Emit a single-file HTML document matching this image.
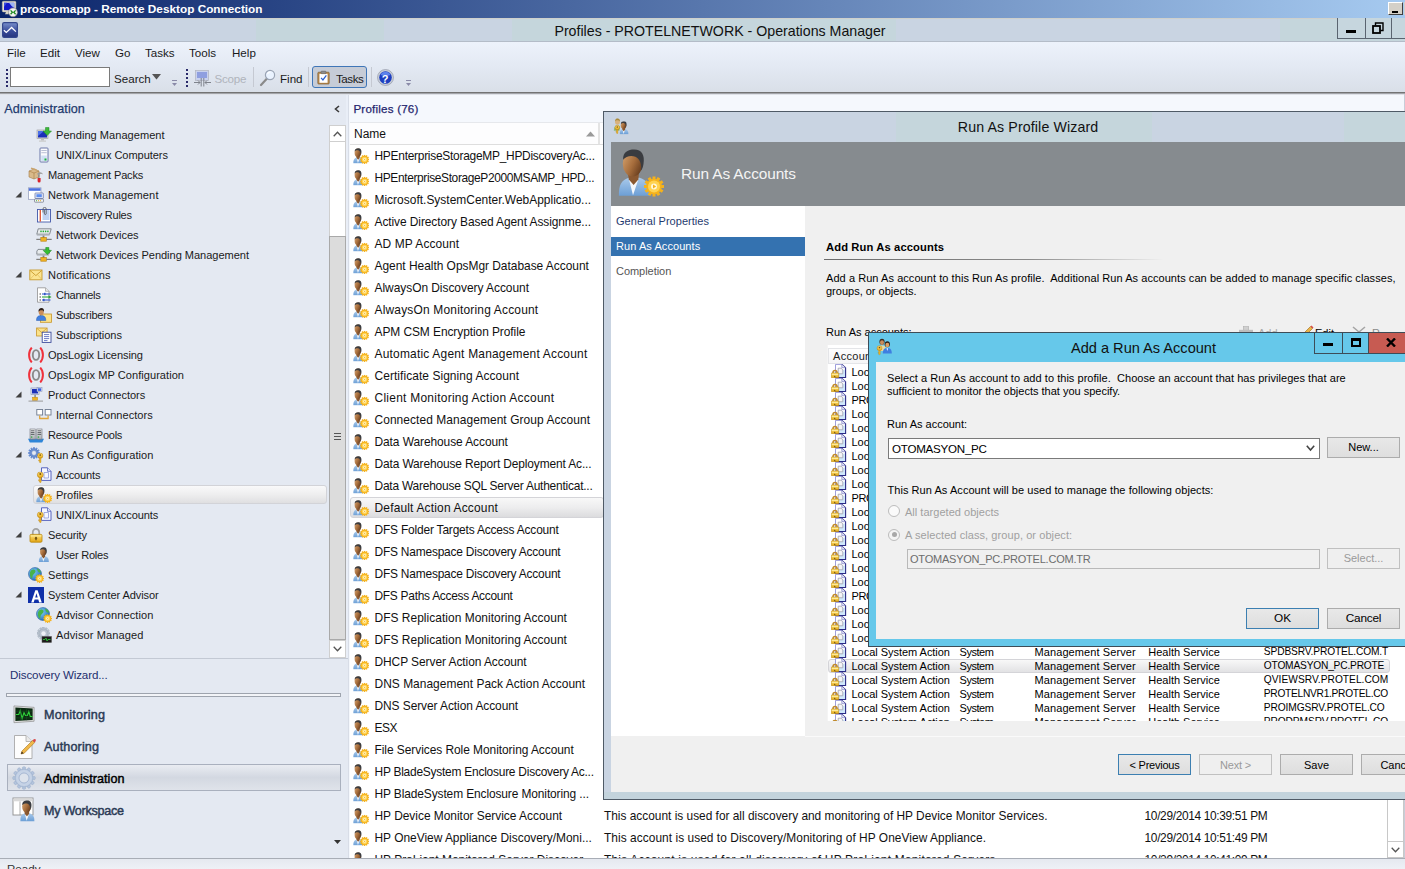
<!DOCTYPE html>
<html lang="en"><head><meta charset="utf-8"><title>Profiles - PROTELNETWORK - Operations Manager</title>
<style>
*{box-sizing:border-box;margin:0;padding:0}
html,body{width:1405px;height:869px;overflow:hidden}
body{position:relative;font-family:"Liberation Sans",sans-serif;background:#fff}
.a{position:absolute}
.t{position:absolute;white-space:pre;line-height:16px}
.clip{position:absolute;overflow:hidden}
</style></head><body>
<svg width="0" height="0" style="position:absolute">
<defs>
<linearGradient id="gBody" x1="0" y1="0" x2="0" y2="1"><stop offset="0" stop-color="#a9c9ea"/><stop offset="1" stop-color="#6c9fd6"/></linearGradient>
<linearGradient id="gFace" x1="0" y1="0" x2="1" y2=".6"><stop offset="0" stop-color="#d9a672"/><stop offset=".6" stop-color="#a66d3c"/><stop offset="1" stop-color="#6b4020"/></linearGradient>
<radialGradient id="gGlobe" cx="0.35" cy="0.35" r="0.8"><stop offset="0" stop-color="#7fd0f5"/><stop offset="1" stop-color="#1c5fb0"/></radialGradient>
<linearGradient id="gGold" x1="0" y1="0" x2="0" y2="1"><stop offset="0" stop-color="#ffe27a"/><stop offset="1" stop-color="#e3a514"/></linearGradient>
<linearGradient id="gGrey" x1="0" y1="0" x2="0" y2="1"><stop offset="0" stop-color="#f4f4f4"/><stop offset="1" stop-color="#a9adb3"/></linearGradient>
<symbol id="gear" viewBox="-5 -5 10 10">
 <g fill="#f5b21c">
 <rect x="-.75" y="-5" width="1.5" height="10"/><rect x="-.75" y="-5" width="1.5" height="10" transform="rotate(30)"/><rect x="-.75" y="-5" width="1.5" height="10" transform="rotate(60)"/><rect x="-.75" y="-5" width="1.5" height="10" transform="rotate(90)"/><rect x="-.75" y="-5" width="1.5" height="10" transform="rotate(120)"/><rect x="-.75" y="-5" width="1.5" height="10" transform="rotate(150)"/>
 <circle r="3.9"/></g><circle r="3" fill="#ffd352"/><circle r="1.5" fill="#fff6d8"/><path d="M-.5 -1 L1.1 0 L-.5 1Z" fill="#f5b21c"/>
</symbol>
<symbol id="gearg" viewBox="-5 -5 10 10">
 <g fill="#8fa9cc" stroke="#5f7fae" stroke-width=".3">
 <rect x="-1" y="-5" width="2" height="10" rx=".5"/><rect x="-1" y="-5" width="2" height="10" rx=".5" transform="rotate(45)"/><rect x="-1" y="-5" width="2" height="10" rx=".5" transform="rotate(90)"/><rect x="-1" y="-5" width="2" height="10" rx=".5" transform="rotate(135)"/>
 <circle r="3.5"/></g><circle r="1.8" fill="#e4e9f2"/>
</symbol>
<symbol id="person" viewBox="0 0 12 16">
 <path d="M.3 15.6 C.2 12 1.2 10.3 3.6 9.6 L7.2 9.6 C9.6 10.3 10.8 12 10.8 15.6 Z" fill="url(#gBody)"/>
 <path d="M3.6 9.8 L5 15.4 L6.9 9.8 Z" fill="#f4f7fb"/>
 <path d="M3.2 7.5 L3.6 10.2 L5.2 12 L6.8 10.2 L7 7.5Z" fill="#8a5830"/>
 <ellipse cx="4.9" cy="4.9" rx="3.3" ry="4.3" fill="url(#gFace)"/>
 <path d="M1.7 3.6 C1.6 1 3.4 .2 5.4 .2 C8 .2 9 2.2 8.5 5 C8.3 6.2 8 6.8 7.7 7.2 C7.9 5.2 7.4 3.4 5.8 2.6 C4.4 2 2.6 2.4 1.7 3.6 Z" fill="#3a3c40"/>
</symbol>
<symbol id="ic-prof" viewBox="0 0 16 16">
 <use href="#person" x="0" y="0" width="11.8" height="15.8"/>
 <use href="#gear" x="7" y="6.8" width="9.2" height="9.2"/>
</symbol>
<symbol id="ic-user" viewBox="0 0 16 16">
 <use href="#person" x="2.5" y="0" width="11.5" height="15.5"/>
</symbol>
<symbol id="ic-pending" viewBox="0 0 16 16">
 <rect x="1" y="3" width="11" height="8.5" fill="#d8d8d8" stroke="#9a9a9a" stroke-width=".6"/>
 <rect x="2" y="4" width="9" height="6.5" fill="#1c2fb8"/>
 <path d="M2 4 L8 4 L2 9 Z" fill="#4a6fe8"/>
 <rect x="5" y="11.5" width="3" height="2" fill="#bdbdbd"/><rect x="3" y="13.5" width="7" height="1.2" fill="#c9c9c9"/>
 <path d="M9.5 0.5 H13 V4 H15.5 L11.2 8.5 L7 4 H9.5 Z" fill="#3db83a" stroke="#1f8a22" stroke-width=".5"/>
</symbol>
<symbol id="ic-tower" viewBox="0 0 16 16">
 <rect x="4" y="1" width="8" height="14" rx=".8" fill="#fbfbfd" stroke="#5b6aa0" stroke-width=".9"/>
 <rect x="5.3" y="3" width="5.4" height="1" fill="#b8bfd4"/><rect x="5.3" y="5.2" width="5.4" height="1" fill="#b8bfd4"/>
 <rect x="5.2" y="8.5" width="5.6" height="5.5" fill="#cfe0f3"/>
 <rect x="8.5" y="11.5" width="2" height="2" fill="#19b33a"/>
</symbol>
<symbol id="ic-mp" viewBox="0 0 16 16">
 <path d="M1 4 L6 2 L11 4 L11 10 L6 12 L1 10 Z" fill="#d9b98a" stroke="#a67c45" stroke-width=".6"/>
 <path d="M1 4 L6 6 L11 4 M6 6 V12" fill="none" stroke="#a67c45" stroke-width=".6"/>
 <path d="M3 1.2 L8.5 3 " stroke="#c9a36c" stroke-width="1.4"/>
 <path d="M9 7 C11 4.5 14 5 15 7.5 C13.5 6.5 12 6.5 11 8.5 Z" fill="#9a9a9a"/>
 <rect x="10.2" y="8" width="1.3" height="4" fill="#8a8a8a"/>
 <path d="M9.6 11 H12.6 V14 A1.5 1.5 0 0 1 9.6 14 Z" fill="#d8232a"/>
</symbol>
<symbol id="ic-netmgmt" viewBox="0 0 16 16">
 <rect x=".5" y=".8" width="12.5" height="11.5" fill="#fff" stroke="#8c97b8" stroke-width=".7"/>
 <rect x=".9" y="1.2" width="11.7" height="2.6" fill="#4a6fe0"/>
 <rect x="7" y="6" width="8.3" height="5.5" rx=".6" fill="#e9edf7" stroke="#5b6aa0" stroke-width=".7"/>
 <rect x="8.4" y="7.2" width="5.4" height="3" fill="#5d8df0"/>
 <rect x="6.5" y="12" width="9" height="3.2" rx=".6" fill="#f3f3f3" stroke="#6b7488" stroke-width=".7"/>
 <rect x="8" y="13.2" width="1" height="1" fill="#4bb34b"/><rect x="10" y="13.2" width="1" height="1" fill="#e0b030"/><rect x="12" y="13.2" width="1" height="1" fill="#e0b030"/>
</symbol>
<symbol id="ic-rules" viewBox="0 0 16 16">
 <rect x="1.5" y="2.5" width="13" height="12.5" fill="#fff" stroke="#4257a8" stroke-width=".9"/>
 <path d="M6.5 4 H13.5 M6.5 6 H13.5 M6.5 8 H13.5 M6.5 10 H13.5 M6.5 12 H13.5" stroke="#6f9ae0" stroke-width=".9"/>
 <rect x="3.6" y="3" width="1.4" height="11.6" fill="#e05a3a"/>
 <path d="M7 5.5 V2 A1.6 1.6 0 0 1 10.2 2 V7 A1 1 0 0 1 8.4 7 V3" fill="none" stroke="#555" stroke-width=".8"/>
</symbol>
<symbol id="ic-netdev" viewBox="0 0 16 16">
 <path d="M2.2 1.8 H15.2 L13.6 7.2 H.8 Z" fill="#e9ecee" stroke="#6f757c" stroke-width=".8"/>
 <path d="M.8 7.2 H13.6 V8.6 H.8Z" fill="#aeb3b8"/>
 <rect x="4.3" y="3.6" width="1.4" height="1.6" fill="#22a832"/><rect x="6.6" y="3.6" width="1.4" height="1.6" fill="#22a832"/><rect x="8.9" y="3.6" width="1.4" height="1.6" fill="#22a832"/><rect x="11.2" y="3.6" width="1.4" height="1.6" fill="#22a832"/>
 <rect x="6.6" y="8.6" width="1.8" height="2.4" fill="#7d7d7d"/>
 <rect x="4.8" y="10.4" width="5.6" height="3.8" fill="#f0b323" stroke="#b87f0c" stroke-width=".6"/>
 <rect x=".3" y="11.8" width="4.5" height="1.2" fill="#7f7f7f"/><rect x="10.4" y="11.8" width="5.3" height="1.2" fill="#7f7f7f"/>
</symbol>
<symbol id="ic-netdevp" viewBox="0 0 16 16">
 <path d="M2 2.4 H11.5 Q14 2.4 13.6 4.6 L13 7.2 H.8 Q.4 3.5 2 2.4 Z" fill="#e9ecee" stroke="#6f757c" stroke-width=".8"/>
 <path d="M.8 7.2 H13 V8.6 H.8Z" fill="#aeb3b8"/>
 <rect x="6.6" y="8.6" width="1.8" height="2.4" fill="#7d7d7d"/>
 <rect x="4.8" y="10.4" width="5.6" height="3.8" fill="#f0b323" stroke="#b87f0c" stroke-width=".6"/>
 <rect x=".3" y="11.8" width="4.5" height="1.2" fill="#7f7f7f"/><rect x="10.4" y="11.8" width="5.3" height="1.2" fill="#7f7f7f"/>
 <path d="M9.8 0.4 H12.8 V3.4 H15.4 L11.3 7.6 L7.2 3.4 H9.8 Z" fill="#35c030" stroke="#1a8a1e" stroke-width=".6"/>
</symbol>
<symbol id="ic-mail" viewBox="0 0 16 16">
 <rect x="1.8" y="3" width="12.2" height="9.8" fill="#fbe491" stroke="#c89a2c" stroke-width=".9"/>
 <path d="M2 3.4 L7.9 8.6 L13.8 3.4" fill="none" stroke="#c89a2c" stroke-width=".9"/>
 <path d="M2 12.4 L6 8 M13.8 12.4 L9.8 8" stroke="#e2bb58" stroke-width=".7"/>
</symbol>
<symbol id="ic-chan" viewBox="0 0 16 16">
 <path d="M1.5 .8 H9.5 L13 4.3 V15.2 H1.5 Z" fill="#fff" stroke="#8f8f8f" stroke-width=".8"/>
 <path d="M9.5 .8 V4.3 H13" fill="#e8e8e8" stroke="#8f8f8f" stroke-width=".6"/>
 <path d="M3.5 7 H5 M3.5 10 H5 M3.5 13 H5" stroke="#444" stroke-width="1"/>
 <path d="M6 7 H14.5" stroke="#3457c8" stroke-width="1.1"/><rect x="8" y="5.8" width="1.6" height="2.4" fill="#3457c8"/>
 <path d="M6 10 H13" stroke="#2fa43a" stroke-width="1.1"/><path d="M12.5 8.3 L15.5 10 L12.5 11.7 Z" fill="#2fa43a"/>
 <path d="M6 13 H14.5" stroke="#3457c8" stroke-width="1.1"/><rect x="7" y="11.8" width="1.6" height="2.4" fill="#3457c8"/>
</symbol>
<symbol id="ic-subscr" viewBox="0 0 16 16">
 <rect x="4.5" y="7" width="11" height="8.3" fill="#fbe28a" stroke="#c8962a" stroke-width=".8"/>
 <path d="M.5 13.5 C.5 9.5 2.5 8.6 5.2 8.6 C7.8 8.6 9.8 9.5 9.8 13.5 Z" fill="#3f7fe0" stroke="#2a5cb0" stroke-width=".5"/>
 <ellipse cx="5.2" cy="5.3" rx="2.5" ry="3" fill="#c98e5c"/>
 <path d="M2.5 5 C2.2 2 3.8 1 5.4 1 C7.4 1 8.4 2.6 7.9 5 C7.4 3.6 6.8 3.2 5.4 3.2 C4 3.2 3 3.8 2.5 5 Z" fill="#2b1d16"/>
</symbol>
<symbol id="ic-subs" viewBox="0 0 16 16">
 <rect x=".6" y="1" width="10.5" height="8" fill="#fbe28a" stroke="#c8962a" stroke-width=".8"/>
 <path d="M.8 1.3 L5.8 5.6 L10.8 1.3" fill="none" stroke="#c8962a" stroke-width=".7"/>
 <rect x="6.2" y="5.2" width="8.8" height="10.2" fill="#fff" stroke="#3b4a9a" stroke-width=".9"/>
 <path d="M8 7.6 H13.2 M8 9.6 H13.2 M8 11.6 H13.2 M8 13.6 H11.5" stroke="#5a6cc0" stroke-width=".9"/>
</symbol>
<symbol id="ic-ops" viewBox="0 0 16 16">
 <path d="M3.8 .6 C.2 4.3 .2 11.7 3.8 15.4" fill="none" stroke="#f0323c" stroke-width="2"/>
 <path d="M12.2 .6 C15.8 4.3 15.8 11.7 12.2 15.4" fill="none" stroke="#f0323c" stroke-width="2"/>
 <ellipse cx="8" cy="8" rx="3.2" ry="4.9" fill="none" stroke="#8a8a8a" stroke-width="1.9"/>
</symbol>
<symbol id="ic-prodconn" viewBox="0 0 16 16">
 <rect x="3" y="1" width="8" height="6.5" fill="#e8ecf6" stroke="#7a86b0" stroke-width=".6"/><rect x="4" y="2" width="6" height="4.5" fill="#1c2fb8"/>
 <rect x="9" y="0.6" width="5" height="4" fill="#e8ecf6" stroke="#7a86b0" stroke-width=".5"/><rect x="9.8" y="1.3" width="3.4" height="2.6" fill="#3c5fe0"/>
 <rect x="6.3" y="7.8" width="1.6" height="3" fill="#8d8d8d"/>
 <rect x="4.6" y="10.3" width="5" height="3.2" fill="#f0b323" stroke="#c48a10" stroke-width=".5"/>
 <rect x=".5" y="13.6" width="14.5" height="1" fill="#9a9a9a"/>
</symbol>
<symbol id="ic-intconn" viewBox="0 0 16 16">
 <rect x=".8" y="2.5" width="5.8" height="5.5" fill="#fff" stroke="#6d7a8f" stroke-width=".9"/>
 <rect x="9.2" y="2.5" width="5.8" height="5.5" fill="#fff" stroke="#6d7a8f" stroke-width=".9"/>
 <path d="M3.7 8.5 V11.5 H12.1 V8.5" fill="none" stroke="#e2a63a" stroke-width="1.3"/>
</symbol>
<symbol id="ic-pools" viewBox="0 0 16 16">
 <path d="M0 11.8 H16 L14.2 15.4 H1.8 Z" fill="#2f86d8"/>
 <rect x="2" y="2" width="5.2" height="10.2" fill="url(#gGrey)" stroke="#70757c" stroke-width=".6"/>
 <rect x="8.8" y="2" width="5.2" height="10.2" fill="url(#gGrey)" stroke="#70757c" stroke-width=".6"/>
 <path d="M2.8 3.8 H6.4 M2.8 5.6 H6.4 M2.8 7.4 H6.4 M9.6 3.8 H13.2 M9.6 5.6 H13.2 M9.6 7.4 H13.2" stroke="#4f5358" stroke-width=".9"/>
 <rect x="3" y="9.4" width="1.3" height="1.3" fill="#2fae3f"/><rect x="9.8" y="9.4" width="1.3" height="1.3" fill="#2fae3f"/>
</symbol>
<symbol id="key" viewBox="0 0 8 12">
 <circle cx="4" cy="3.4" r="3.1" fill="url(#gGold)" stroke="#b87f0c" stroke-width=".6"/><circle cx="4" cy="2.6" r="1" fill="#7a5206"/>
 <path d="M3.1 6.2 H4.9 V11 L4 11.9 L3.1 11 V9.6 H2.2 V8.6 H3.1 Z" fill="#eab52c" stroke="#b87f0c" stroke-width=".4"/>
</symbol>
<symbol id="ic-runas" viewBox="0 0 16 16">
 <g transform="translate(6 6)"><g fill="#6a90d4">
 <rect x="-.8" y="-6" width="1.6" height="12"/><rect x="-.8" y="-6" width="1.6" height="12" transform="rotate(30)"/><rect x="-.8" y="-6" width="1.6" height="12" transform="rotate(60)"/><rect x="-.8" y="-6" width="1.6" height="12" transform="rotate(90)"/><rect x="-.8" y="-6" width="1.6" height="12" transform="rotate(120)"/><rect x="-.8" y="-6" width="1.6" height="12" transform="rotate(150)"/>
 <circle r="4.4" stroke="#4a6fb6" stroke-width=".4"/></g><circle r="2.4" fill="#e4e9f2" stroke="#4a6fb6" stroke-width=".4"/></g>
 <use href="#key" x="8.8" y="5.8" width="6.8" height="10.2"/>
</symbol>
<symbol id="ic-acct" viewBox="0 0 16 16">
 <path d="M5.5 .8 H11.5 L15 4.3 V13.4 H5.5 Z" fill="#f6f7ff" stroke="#4554b8" stroke-width=".9"/>
 <path d="M11.5 .8 V4.3 H15" fill="#dfe3fa" stroke="#4554b8" stroke-width=".7"/>
 <path d="M8 5.5 H12.5 V11 H8 Z" fill="none" stroke="#8e9ad8" stroke-width=".8"/>
 <use href="#key" x=".5" y="4.6" width="7.6" height="11.4"/>
</symbol>
<symbol id="ic-lock" viewBox="0 0 16 16">
 <path d="M4.8 8 V5.2 A3.2 3.4 0 0 1 11.2 5.2 V8" fill="none" stroke="#a3a3a3" stroke-width="1.7"/>
 <rect x="2" y="7.4" width="12" height="7.8" rx="1.1" fill="url(#gGold)" stroke="#b8860b" stroke-width=".8"/>
 <path d="M2.6 9 H13.4" stroke="#fff1a8" stroke-width=".8"/>
 <path d="M8 9.6 L9.5 11.4 H8.6 V13.2 H7.4 V11.4 H6.5 Z" fill="#5a3e06"/>
</symbol>
<symbol id="ic-globe" viewBox="0 0 16 16">
 <circle cx="7" cy="7" r="6.5" fill="url(#gGlobe)" stroke="#1a4f94" stroke-width=".5"/>
 <path d="M3 3.5 C5 2 7 2.5 7.5 4 C8 5.5 6 6.5 5 8 C4 9.5 5 11.5 3.5 11.5 C2 10 1 6 3 3.5 Z M9 1.5 C11 2 12.5 3.5 13 5.5 C11.5 6 10 5 9.5 3.5 Z M9 8 C10.5 7.5 12 8 12.5 9.5 C11.5 11.5 10 12.5 8.5 12.8 C8 11 8 9 9 8 Z" fill="#47b24a"/>
 <use href="#gear" x="7.2" y="7.2" width="8.8" height="8.8"/>
</symbol>
<symbol id="ic-adv" viewBox="0 0 16 16">
 <rect width="16" height="16" fill="#0f2fa8"/>
 <path d="M3.2 15.5 L7.3 3.2 H9.6 L13.8 15.5 H11.2 L10.3 12.6 H6.6 L5.7 15.5 Z M7.2 10.5 H9.7 L8.45 6.3 Z" fill="#fff" fill-rule="evenodd"/>
</symbol>
<symbol id="ic-advman" viewBox="0 0 16 16">
 <g transform="translate(7.5 6.5)"><g fill="#b9c3cf" stroke="#8d98a8" stroke-width=".3">
 <rect x="-.9" y="-6.3" width="1.8" height="12.6"/><rect x="-.9" y="-6.3" width="1.8" height="12.6" transform="rotate(30)"/><rect x="-.9" y="-6.3" width="1.8" height="12.6" transform="rotate(60)"/><rect x="-.9" y="-6.3" width="1.8" height="12.6" transform="rotate(90)"/><rect x="-.9" y="-6.3" width="1.8" height="12.6" transform="rotate(120)"/><rect x="-.9" y="-6.3" width="1.8" height="12.6" transform="rotate(150)"/>
 <circle r="4.5"/></g><circle r="2.2" fill="#eef1f6"/></g>
 <rect x="6" y="9.5" width="9.5" height="6" fill="#1d1d1d" stroke="#555" stroke-width=".5"/>
 <path d="M7 12.5 H9 L10 11 L11 14 L12 12.5 H14.5" fill="none" stroke="#2fd23a" stroke-width=".8"/>
</symbol>
<symbol id="ic-lvacct" viewBox="0 0 16 16" preserveAspectRatio="none">
 <path d="M4.5 .5 H10.8 L14.6 4.2 V15.4 H4.5 Z" fill="#fff"/>
 <path d="M8 9 L14 6 V15 H6 Z" fill="#c4e2fa" opacity=".8"/>
 <path d="M4.5 15.4 V.5 H10.8" fill="none" stroke="#8c8cd6" stroke-width=".9"/>
 <path d="M10.8 .5 L14.6 4.2 V15.4 H4.5" fill="none" stroke="#2b2b86" stroke-width="1.1"/>
 <path d="M10.8 .5 V4.2 H14.6" fill="#e6e9fa" stroke="#6a6ab8" stroke-width=".6"/>
 <path d="M7.2 4.8 H10 L11.8 6.6 V11.2 H7.2 Z" fill="#f4f4f6" stroke="#9a9aa8" stroke-width=".8"/>
 <path d="M2 10.8 V9.6 A2 2.2 0 0 1 6 9.6 V10.8" fill="none" stroke="#c08a2c" stroke-width="1.5"/>
 <rect x=".3" y="10.2" width="7.4" height="5.6" rx=".6" fill="url(#gGold)" stroke="#b8860b" stroke-width=".6"/>
 <path d="M.8 12 H7.2" stroke="#fff3b0" stroke-width=".8"/>
 <path d="M3.2 13 L5 15 H3.2Z" fill="#5a4a10"/>
</symbol>
<symbol id="ic-wiz" viewBox="0 0 16 16">
 <use href="#person" x="6" y="3" width="9.5" height="12.5"/>
 <ellipse cx="4.2" cy="3.6" rx="2.3" ry="2.8" fill="#d9b27c"/><path d="M2 3.2 C2 1 3.2 .5 4.4 .5 C5.8 .5 6.6 1.6 6.4 3.2 C5.8 2.2 5 2 4.2 2 C3.2 2 2.4 2.4 2 3.2Z" fill="#a88a3a"/>
 <path d="M.8 12 C.8 8.2 2.4 7 4.2 7 C5.4 7 6.2 7.4 6.8 8.2 L6 12 Z" fill="#8fb97a"/>
 <use href="#key" x="1.2" y="6" width="5.6" height="9.6"/>
</symbol>
</defs>
</svg>

<div class="a" style="left:0px;top:0px;width:1405px;height:18px;background:linear-gradient(to right,#0a246a,#a6caf0)"></div>
<svg class="a" style="left:1px;top:0px" width="18" height="18" viewBox="0 0 18 18">
<rect x="1.3" y="1.3" width="13.6" height="10.6" rx="1" fill="#e6e2d2" stroke="#b8b4a4" stroke-width=".5"/><rect x="3" y="2.8" width="10.2" height="7.4" fill="#1418c8"/><path d="M8 2.8 H13.2 V8 Q10 6 8 2.8Z" fill="#9ab4f4"/><path d="M3 2.8 H6 L3 7Z" fill="#3a4ee0"/>
<path d="M5 12 L8 12 L7.5 14.2 H4 Z" fill="#d8d4c4"/>
<circle cx="12" cy="12.3" r="4.4" fill="#f4f4f4" stroke="#8a8a8a" stroke-width=".7"/><path d="M9.6 10.4 L11.4 12.3 L9.6 14.2 M14.6 10.4 L12.8 12.3 L14.6 14.2" fill="none" stroke="#1e8a1e" stroke-width="1.3"/></svg>
<div class="t" style="left:20px;top:0.91px;font-size:11.8px;color:#fff;font-weight:bold">proscomapp - Remote Desktop Connection</div>
<div class="a" style="left:1388px;top:2px;width:15px;height:13px;background:#d4d0c8;border:1px solid;border-color:#fff #404040 #404040 #fff"></div>
<div class="a" style="left:1392px;top:11px;width:6px;height:2px;background:#000"></div>
<div class="a" style="left:1404px;top:2px;width:1px;height:13px;background:#d4d0c8"></div>
<div class="a" style="left:0px;top:18px;width:1405px;height:23px;background:#c9d4e2"></div>
<div class="a" style="left:256px;top:18px;width:128px;height:23px;background:#c5d6dc"></div>
<div class="a" style="left:512px;top:18px;width:384px;height:23px;background:#c5d6dc"></div>
<div class="a" style="left:1280px;top:18px;width:125px;height:23px;background:#c5d6dc"></div>
<div class="a" style="left:0px;top:41px;width:1405px;height:1px;background:#b4bcc8"></div>
<div class="a" style="left:0px;top:18px;width:1405px;height:1px;background:#cfd0cc"></div>
<svg class="a" style="left:2px;top:22px" width="16" height="16" viewBox="0 0 16 16"><defs><linearGradient id="gApp" x1="0" y1="0" x2="0" y2="1"><stop offset="0" stop-color="#7990cc"/><stop offset=".55" stop-color="#3a4e9c"/><stop offset="1" stop-color="#27357c"/></linearGradient></defs><rect x=".6" y=".6" width="14.8" height="14.8" rx="1.6" fill="url(#gApp)" stroke="#34488e" stroke-width="1.2"/><path d="M1.9 8.2 L4.3 10.4 L9.6 5.5 L13.9 9.6" fill="none" stroke="#fff" stroke-width="1.3"/></svg>
<div class="t" style="left:420px;width:600px;text-align:center;top:23.08px;font-size:14.2px;color:#111;">Profiles - PROTELNETWORK - Operations Manager</div>
<div class="a" style="left:1337px;top:18px;width:68px;height:21px;border-left:1px solid #5a6470;border-bottom:1px solid #5a6470;background:#c6d6de"></div>
<div class="a" style="left:1365px;top:18px;width:1px;height:21px;background:#5a6470"></div>
<div class="a" style="left:1391px;top:18px;width:1px;height:21px;background:#5a6470"></div>
<div class="a" style="left:1346px;top:30px;width:10px;height:3px;background:#000"></div>
<svg class="a" style="left:1372px;top:22px" width="12" height="12" viewBox="0 0 12 12"><path d="M3.5 3.5 V1 H11 V8.5 H8.5" fill="none" stroke="#000" stroke-width="1.4"/><rect x="1" y="4" width="7" height="7" fill="none" stroke="#000" stroke-width="1.8"/></svg>
<div class="a" style="left:0px;top:42px;width:1405px;height:50px;background:linear-gradient(#edf2fb 0%,#e4eaf4 45%,#d9dfe8 100%)"></div>
<div class="a" style="left:0px;top:92px;width:1405px;height:1px;background:#737373"></div>
<div class="a" style="left:0px;top:93px;width:1405px;height:1px;background:#a2a4a9"></div>
<div class="t" style="left:7px;top:44.98px;font-size:11.6px;color:#1a1a1a;">File</div>
<div class="t" style="left:40px;top:44.98px;font-size:11.6px;color:#1a1a1a;">Edit</div>
<div class="t" style="left:75px;top:44.98px;font-size:11.6px;color:#1a1a1a;">View</div>
<div class="t" style="left:115px;top:44.98px;font-size:11.6px;color:#1a1a1a;">Go</div>
<div class="t" style="left:145px;top:44.98px;font-size:11.6px;color:#1a1a1a;">Tasks</div>
<div class="t" style="left:189px;top:44.98px;font-size:11.6px;color:#1a1a1a;">Tools</div>
<div class="t" style="left:232px;top:44.98px;font-size:11.6px;color:#1a1a1a;">Help</div>
<div class="a" style="left:6px;top:69px;width:2px;height:2px;background:#2a2a6a"></div>
<div class="a" style="left:6px;top:73px;width:2px;height:2px;background:#2a2a6a"></div>
<div class="a" style="left:6px;top:77px;width:2px;height:2px;background:#2a2a6a"></div>
<div class="a" style="left:6px;top:81px;width:2px;height:2px;background:#2a2a6a"></div>
<div class="a" style="left:6px;top:85px;width:2px;height:2px;background:#2a2a6a"></div>
<div class="a" style="left:186px;top:69px;width:2px;height:2px;background:#2a2a6a"></div>
<div class="a" style="left:186px;top:73px;width:2px;height:2px;background:#2a2a6a"></div>
<div class="a" style="left:186px;top:77px;width:2px;height:2px;background:#2a2a6a"></div>
<div class="a" style="left:186px;top:81px;width:2px;height:2px;background:#2a2a6a"></div>
<div class="a" style="left:186px;top:85px;width:2px;height:2px;background:#2a2a6a"></div>
<div class="a" style="left:10px;top:67px;width:100px;height:20px;background:#fff;border:1px solid #7a7a7a"></div>
<div class="t" style="left:114px;top:70.98px;font-size:11.6px;color:#1a1a1a;">Search</div>
<svg class="a" style="left:152px;top:74px" width="9" height="6"><path d="M0 0 H9 L4.5 5.5Z" fill="#555"/></svg>
<div class="a" style="left:172px;top:80px;width:5px;height:1px;background:#8a8aa8"></div>
<svg class="a" style="left:172px;top:83px" width="5" height="3"><path d="M0 0 H5 L2.5 3Z" fill="#8a8aa8"/></svg>
<div class="a" style="left:406px;top:80px;width:5px;height:1px;background:#8a8aa8"></div>
<svg class="a" style="left:406px;top:83px" width="5" height="3"><path d="M0 0 H5 L2.5 3Z" fill="#8a8aa8"/></svg>
<svg class="a" style="left:194px;top:70px" width="17" height="17" viewBox="0 0 17 17"><rect x="1.5" y="0.5" width="13" height="10" fill="#c9d2ee" stroke="#b5b9c4" stroke-width=".8"/><rect x="3" y="2" width="10" height="6" fill="#8f9fe0"/>
<path d="M0 12.5 H6 M4 10.5 L6 12.5 L4 14.5 M17 12.5 H11 M13 10.5 L11 12.5 L13 14.5 M7.2 8 V16.5 M9.8 8 V16.5" fill="none" stroke="#7f838c" stroke-width="1"/></svg>
<div class="t" style="left:214.5px;top:70.98px;font-size:11.6px;color:#b0b4bc;letter-spacing:-0.219px;">Scope</div>
<div class="a" style="left:253px;top:67px;width:1px;height:20px;background:#c5c9d2"></div>
<svg class="a" style="left:259px;top:69px" width="18" height="18" viewBox="0 0 18 18"><path d="M2 16 L8 9.5" stroke="#8a8a8a" stroke-width="2.2" stroke-linecap="round"/><circle cx="11" cy="6" r="4.6" fill="#eaf3ff" stroke="#9aa4b4" stroke-width="1.2"/><path d="M8.5 5 A3 3 0 0 1 11.5 3" fill="none" stroke="#fff" stroke-width="1.2"/></svg>
<div class="t" style="left:280px;top:70.98px;font-size:11.6px;color:#1a1a1a;">Find</div>
<div class="a" style="left:308px;top:67px;width:1px;height:20px;background:#c5c9d2"></div>
<div class="a" style="left:312px;top:66px;width:55px;height:22px;background:#c6ccd7;border:1px solid #3f76b8;border-radius:3px"></div>
<svg class="a" style="left:317px;top:70px" width="13" height="15" viewBox="0 0 16 17"><rect x="1" y="2" width="14" height="14.5" rx="1" fill="#b98a4e" stroke="#7c5a2a" stroke-width=".8"/><rect x="3" y="4" width="10" height="11" fill="#fff"/><rect x="5" y=".6" width="6" height="3.2" rx=".8" fill="#8d8d8d" stroke="#555" stroke-width=".5"/><path d="M5 9 L7.3 11.5 L11.5 6" fill="none" stroke="#2a5fd0" stroke-width="1.5"/></svg>
<div class="t" style="left:336px;top:70.98px;font-size:11.6px;color:#1a1a1a;letter-spacing:-0.450px;">Tasks</div>
<div class="a" style="left:371px;top:67px;width:1px;height:20px;background:#c5c9d2"></div>
<svg class="a" style="left:377px;top:69px" width="17" height="17" viewBox="0 0 17 17"><circle cx="8.5" cy="8.5" r="8" fill="#c9ced8" stroke="#8a90a0" stroke-width=".6"/><circle cx="8.5" cy="8.5" r="6.3" fill="#1d3fc0"/><path d="M3.5 6 A5.5 5.5 0 0 1 13.5 6 Q8.5 8 3.5 6Z" fill="#5c82ec"/></svg>
<div class="t" style="left:381.7px;top:70.69px;font-size:11px;color:#fff;font-weight:bold">?</div>
<div class="a" style="left:0px;top:94px;width:348px;height:764px;background:#e4e9f2"></div>
<div class="a" style="left:346px;top:94px;width:3px;height:564px;background:#e9eef7"></div>
<div class="a" style="left:348px;top:94px;width:1px;height:764px;background:#d8dde7"></div>
<div class="a" style="left:349px;top:94px;width:1px;height:764px;background:#f5f8fd"></div>
<div class="t" style="left:4.3px;top:100.63px;font-size:12.6px;color:#1e3a6e;-webkit-text-stroke:.25px #1e3a6e;letter-spacing:0.054px;">Administration</div>
<svg class="a" style="left:334px;top:105px" width="6" height="8"><path d="M5 1 L1.5 4 L5 7" fill="none" stroke="#3a3a3a" stroke-width="1.6"/></svg>
<div class="a" style="left:33px;top:485px;width:294px;height:19px;background:linear-gradient(#f9f9fa 0%,#eeeeef 50%,#dfdfe1 100%);border:1px solid #d2d3d8;border-radius:3px"></div>
<svg class="a" style="left:36px;top:127px" width="16" height="16"><use href="#ic-pending"/></svg>
<div class="t" style="left:56px;top:127.17px;font-size:11.05px;color:#1a1a1a;letter-spacing:0.030px;">Pending Management</div>
<svg class="a" style="left:36px;top:147px" width="16" height="16"><use href="#ic-tower"/></svg>
<div class="t" style="left:56px;top:147.17px;font-size:11.05px;color:#1a1a1a;letter-spacing:-0.051px;">UNIX/Linux Computers</div>
<svg class="a" style="left:28px;top:167px" width="16" height="16"><use href="#ic-mp"/></svg>
<div class="t" style="left:48px;top:167.17px;font-size:11.05px;color:#1a1a1a;letter-spacing:-0.149px;">Management Packs</div>
<svg class="a" style="left:28px;top:187px" width="16" height="16"><use href="#ic-netmgmt"/></svg>
<div class="t" style="left:48px;top:187.17px;font-size:11.05px;color:#1a1a1a;letter-spacing:0.142px;">Network Management</div>
<svg class="a" style="left:15px;top:191px" width="7" height="7"><path d="M6.5 .5 V6.5 H.5Z" fill="#404040"/></svg>
<svg class="a" style="left:36px;top:207px" width="16" height="16"><use href="#ic-rules"/></svg>
<div class="t" style="left:56px;top:207.17px;font-size:11.05px;color:#1a1a1a;letter-spacing:-0.272px;">Discovery Rules</div>
<svg class="a" style="left:36px;top:227px" width="16" height="16"><use href="#ic-netdev"/></svg>
<div class="t" style="left:56px;top:227.17px;font-size:11.05px;color:#1a1a1a;letter-spacing:-0.020px;">Network Devices</div>
<svg class="a" style="left:36px;top:247px" width="16" height="16"><use href="#ic-netdevp"/></svg>
<div class="t" style="left:56px;top:247.17px;font-size:11.05px;color:#1a1a1a;letter-spacing:-0.032px;">Network Devices Pending Management</div>
<svg class="a" style="left:28px;top:267px" width="16" height="16"><use href="#ic-mail"/></svg>
<div class="t" style="left:48px;top:267.17px;font-size:11.05px;color:#1a1a1a;letter-spacing:0.194px;">Notifications</div>
<svg class="a" style="left:15px;top:271px" width="7" height="7"><path d="M6.5 .5 V6.5 H.5Z" fill="#404040"/></svg>
<svg class="a" style="left:36px;top:287px" width="16" height="16"><use href="#ic-chan"/></svg>
<div class="t" style="left:56px;top:287.17px;font-size:11.05px;color:#1a1a1a;letter-spacing:-0.284px;">Channels</div>
<svg class="a" style="left:36px;top:307px" width="16" height="16"><use href="#ic-subscr"/></svg>
<div class="t" style="left:56px;top:307.17px;font-size:11.05px;color:#1a1a1a;letter-spacing:-0.203px;">Subscribers</div>
<svg class="a" style="left:36px;top:327px" width="16" height="16"><use href="#ic-subs"/></svg>
<div class="t" style="left:56px;top:327.17px;font-size:11.05px;color:#1a1a1a;letter-spacing:-0.027px;">Subscriptions</div>
<svg class="a" style="left:28px;top:347px" width="16" height="16"><use href="#ic-ops"/></svg>
<div class="t" style="left:48px;top:347.17px;font-size:11.05px;color:#1a1a1a;letter-spacing:-0.084px;">OpsLogix Licensing</div>
<svg class="a" style="left:28px;top:367px" width="16" height="16"><use href="#ic-ops"/></svg>
<div class="t" style="left:48px;top:367.17px;font-size:11.05px;color:#1a1a1a;letter-spacing:0.046px;">OpsLogix MP Configuration</div>
<svg class="a" style="left:28px;top:387px" width="16" height="16"><use href="#ic-prodconn"/></svg>
<div class="t" style="left:48px;top:387.17px;font-size:11.05px;color:#1a1a1a;letter-spacing:-0.020px;">Product Connectors</div>
<svg class="a" style="left:15px;top:391px" width="7" height="7"><path d="M6.5 .5 V6.5 H.5Z" fill="#404040"/></svg>
<svg class="a" style="left:36px;top:407px" width="16" height="16"><use href="#ic-intconn"/></svg>
<div class="t" style="left:56px;top:407.17px;font-size:11.05px;color:#1a1a1a;letter-spacing:0.015px;">Internal Connectors</div>
<svg class="a" style="left:28px;top:427px" width="16" height="16"><use href="#ic-pools"/></svg>
<div class="t" style="left:48px;top:427.17px;font-size:11.05px;color:#1a1a1a;letter-spacing:-0.276px;">Resource Pools</div>
<svg class="a" style="left:28px;top:447px" width="16" height="16"><use href="#ic-runas"/></svg>
<div class="t" style="left:48px;top:447.17px;font-size:11.05px;color:#1a1a1a;letter-spacing:0.052px;">Run As Configuration</div>
<svg class="a" style="left:15px;top:451px" width="7" height="7"><path d="M6.5 .5 V6.5 H.5Z" fill="#404040"/></svg>
<svg class="a" style="left:36px;top:467px" width="16" height="16"><use href="#ic-acct"/></svg>
<div class="t" style="left:56px;top:467.17px;font-size:11.05px;color:#1a1a1a;letter-spacing:-0.122px;">Accounts</div>
<svg class="a" style="left:36px;top:487px" width="16" height="16"><use href="#ic-prof"/></svg>
<div class="t" style="left:56px;top:487.17px;font-size:11.05px;color:#1a1a1a;letter-spacing:-0.006px;">Profiles</div>
<svg class="a" style="left:36px;top:507px" width="16" height="16"><use href="#ic-acct"/></svg>
<div class="t" style="left:56px;top:507.17px;font-size:11.05px;color:#1a1a1a;letter-spacing:-0.077px;">UNIX/Linux Accounts</div>
<svg class="a" style="left:28px;top:527px" width="16" height="16"><use href="#ic-lock"/></svg>
<div class="t" style="left:48px;top:527.17px;font-size:11.05px;color:#1a1a1a;letter-spacing:-0.129px;">Security</div>
<svg class="a" style="left:15px;top:531px" width="7" height="7"><path d="M6.5 .5 V6.5 H.5Z" fill="#404040"/></svg>
<svg class="a" style="left:36px;top:547px" width="16" height="16"><use href="#ic-user"/></svg>
<div class="t" style="left:56px;top:547.17px;font-size:11.05px;color:#1a1a1a;letter-spacing:-0.238px;">User Roles</div>
<svg class="a" style="left:28px;top:567px" width="16" height="16"><use href="#ic-globe"/></svg>
<div class="t" style="left:48px;top:567.17px;font-size:11.05px;color:#1a1a1a;letter-spacing:0.083px;">Settings</div>
<svg class="a" style="left:28px;top:587px" width="16" height="16"><use href="#ic-adv"/></svg>
<div class="t" style="left:48px;top:587.17px;font-size:11.05px;color:#1a1a1a;letter-spacing:-0.078px;">System Center Advisor</div>
<svg class="a" style="left:15px;top:591px" width="7" height="7"><path d="M6.5 .5 V6.5 H.5Z" fill="#404040"/></svg>
<svg class="a" style="left:36px;top:607px" width="16" height="16"><use href="#ic-globe"/></svg>
<div class="t" style="left:56px;top:607.17px;font-size:11.05px;color:#1a1a1a;letter-spacing:0.094px;">Advisor Connection</div>
<svg class="a" style="left:36px;top:627px" width="16" height="16"><use href="#ic-advman"/></svg>
<div class="t" style="left:56px;top:627.17px;font-size:11.05px;color:#1a1a1a;letter-spacing:0.101px;">Advisor Managed</div>
<div class="a" style="left:329px;top:125px;width:17px;height:533px;background:#fff;border:1px solid #cfcfcf"></div>
<div class="a" style="left:329px;top:141px;width:17px;height:1px;background:#cfcfcf"></div>
<div class="a" style="left:329px;top:640px;width:17px;height:1px;background:#cfcfcf"></div>
<div class="a" style="left:329px;top:236px;width:17px;height:404px;background:#dcdcdc;border:1px solid #a9a9a9"></div>
<svg class="a" style="left:333px;top:131px" width="9" height="6"><path d="M.7 5.3 L4.5 1.3 L8.3 5.3" fill="none" stroke="#555" stroke-width="1.3"/></svg>
<svg class="a" style="left:333px;top:646px" width="9" height="6"><path d="M.7 .7 L4.5 4.7 L8.3 .7" fill="none" stroke="#555" stroke-width="1.3"/></svg>
<div class="a" style="left:334px;top:433px;width:7px;height:1px;background:#555"></div>
<div class="a" style="left:334px;top:436px;width:7px;height:1px;background:#555"></div>
<div class="a" style="left:334px;top:439px;width:7px;height:1px;background:#555"></div>
<div class="a" style="left:0px;top:658px;width:348px;height:1px;background:#c3c9d4"></div>
<div class="t" style="left:10px;top:666.98px;font-size:11.6px;color:#1e2f6e;letter-spacing:-0.120px;">Discovery Wizard...</div>
<div class="a" style="left:6px;top:693px;width:335px;height:4px;background:#f2f4f8;border:1px solid #9ea4ae"></div>
<div class="a" style="left:7px;top:764px;width:334px;height:27px;background:linear-gradient(#e9ecf2 0%,#d3d8e1 50%,#dfe3ea 100%);border:1px solid #a9b0be"></div>
<svg class="a" style="left:13px;top:704px" width="23" height="23" viewBox="0 0 24 24"><path d="M1 2 L22 3.5 V18 L1 19.5 Z" fill="#e0e0e0" stroke="#8a8a8a" stroke-width=".7"/><path d="M2.5 3.6 L20.5 4.8 V16.6 L2.5 17.8 Z" fill="#0c2a12"/><path d="M3 11 H6 L7.5 7 L9.5 15 L11.5 9 L13 12 H15 L16.5 8 L18 13 H20.5" fill="none" stroke="#2fd23a" stroke-width="1.2"/><path d="M3 7.5 H20 M3 14.5 H20 M8 4.5 V17 M14 4.5 V17" stroke="#1d5a28" stroke-width=".5"/></svg>
<svg class="a" style="left:12px;top:734px" width="24" height="26" viewBox="0 0 24 26"><path d="M2.5 1.5 H14 L20 7.5 V24.5 H2.5 Z" fill="#fdfdfd" stroke="#a8a8a8" stroke-width=".9"/><path d="M14 1.5 V7.5 H20" fill="#e9e9e9" stroke="#a8a8a8" stroke-width=".8"/><path d="M9 20 L10 17 L20.5 6.5 L22.6 8.6 L12.2 19.2 Z" fill="#f0b84a" stroke="#a87418" stroke-width=".6"/><path d="M20.5 6.5 L21.8 5.2 Q23 4.6 23.8 5.6 Q24.2 6.8 22.6 8.6 Z" fill="#d94a4a"/><path d="M9 20 L9.8 17.6 L11.6 19.3 Z" fill="#3a2a1a"/></svg>
<svg class="a" style="left:12px;top:766px" width="24" height="24" viewBox="-12 -12 24 24"><g fill="#b4c4dc" stroke="#93a8c8" stroke-width=".4"><rect x="-1.6" y="-11.3" width="3.2" height="22.6" rx="1.2" transform="rotate(0)"/><rect x="-1.6" y="-11.3" width="3.2" height="22.6" rx="1.2" transform="rotate(30)"/><rect x="-1.6" y="-11.3" width="3.2" height="22.6" rx="1.2" transform="rotate(60)"/><rect x="-1.6" y="-11.3" width="3.2" height="22.6" rx="1.2" transform="rotate(90)"/><rect x="-1.6" y="-11.3" width="3.2" height="22.6" rx="1.2" transform="rotate(120)"/><rect x="-1.6" y="-11.3" width="3.2" height="22.6" rx="1.2" transform="rotate(150)"/><circle r="9"/></g><circle r="8" fill="#c6d3e6"/><circle r="5" fill="#dde3ec" stroke="#93a8c8" stroke-width=".7"/></svg>
<svg class="a" style="left:12px;top:797px" width="25" height="26" viewBox="0 0 25 26"><rect x="1" y="1" width="20" height="17" fill="#fff" stroke="#8f8f8f" stroke-width=".9"/><rect x="1.5" y="1.5" width="19" height="2.8" fill="#d9d9d9"/><path d="M8 4.5 V18" stroke="#9a9a9a" stroke-width=".8"/><use href="#person" x="8" y="3" width="16" height="22"/></svg>
<div class="t" style="left:44px;top:706.83px;font-size:12.6px;color:#2b3a55;-webkit-text-stroke:.45px #2b3a55;letter-spacing:0.243px;">Monitoring</div>
<div class="t" style="left:44px;top:738.83px;font-size:12.6px;color:#2b3a55;-webkit-text-stroke:.45px #2b3a55;letter-spacing:0.135px;">Authoring</div>
<div class="t" style="left:44px;top:770.83px;font-size:12.6px;color:#000;-webkit-text-stroke:.45px #000;letter-spacing:0.054px;">Administration</div>
<div class="t" style="left:44px;top:802.83px;font-size:12.6px;color:#2b3a55;-webkit-text-stroke:.45px #2b3a55;letter-spacing:-0.277px;">My Workspace</div>
<svg class="a" style="left:334px;top:840px" width="7" height="4"><path d="M0 0 H7 L3.5 4Z" fill="#333"/></svg>
<div class="a" style="left:0px;top:858px;width:1405px;height:11px;background:linear-gradient(#e4e8ef,#eef1f6)"></div>
<div class="a" style="left:0px;top:858px;width:1405px;height:1px;background:#a8adb6"></div>
<div class="clip" style="left:0;top:859px;width:200px;height:10px">
<div class="t" style="left:7px;top:1.98px;font-size:11.6px;color:#333;">Ready</div>
</div>
<div class="a" style="left:350px;top:94px;width:1055px;height:28px;background:#f5f8fd"></div>
<div class="a" style="left:0px;top:94px;width:1405px;height:1px;background:#dfe2e8"></div>
<div class="t" style="left:353.4px;top:100.88px;font-size:11.6px;color:#26266e;-webkit-text-stroke:.25px #26266e;letter-spacing:0.208px;">Profiles (76)</div>
<div class="a" style="left:350px;top:122px;width:1055px;height:736px;background:#fff"></div>
<div class="a" style="left:350px;top:122px;width:1055px;height:23px;background:#fdfdfe;border-top:1px solid #e6e8ec;border-bottom:1px solid #dedede"></div>
<div class="t" style="left:354px;top:125.84px;font-size:12px;color:#111;">Name</div>
<svg class="a" style="left:586px;top:131px" width="9" height="6"><path d="M0 5.5 L4.5 .5 L9 5.5Z" fill="#9a9a9a"/></svg>
<div class="a" style="left:598px;top:123px;width:2px;height:21px;background:#e4e4e4"></div>
<div class="clip" style="left:350px;top:144px;width:1038px;height:714px">
<div class="a" style="left:0px;top:353px;width:254px;height:21px;background:linear-gradient(#f8f8f8 0%,#ededee 50%,#dcdcde 100%);border:1px solid #d4d4d8;border-radius:3px"></div>
<svg class="a" style="left:3px;top:4px" width="16" height="16"><use href="#ic-prof"/></svg>
<div class="t" style="left:24.5px;top:3.86px;font-size:11.95px;color:#111;letter-spacing:-0.263px;">HPEnterpriseStorageMP_HPDiscoveryAc...</div>
<svg class="a" style="left:3px;top:26px" width="16" height="16"><use href="#ic-prof"/></svg>
<div class="t" style="left:24.5px;top:25.86px;font-size:11.95px;color:#111;letter-spacing:-0.368px;">HPEnterpriseStorageP2000MSAMP_HPD...</div>
<svg class="a" style="left:3px;top:48px" width="16" height="16"><use href="#ic-prof"/></svg>
<div class="t" style="left:24.5px;top:47.86px;font-size:11.95px;color:#111;letter-spacing:0.014px;">Microsoft.SystemCenter.WebApplicatio...</div>
<svg class="a" style="left:3px;top:70px" width="16" height="16"><use href="#ic-prof"/></svg>
<div class="t" style="left:24.5px;top:69.86px;font-size:11.95px;color:#111;letter-spacing:-0.078px;">Active Directory Based Agent Assignme...</div>
<svg class="a" style="left:3px;top:92px" width="16" height="16"><use href="#ic-prof"/></svg>
<div class="t" style="left:24.5px;top:91.86px;font-size:11.95px;color:#111;letter-spacing:0.101px;">AD MP Account</div>
<svg class="a" style="left:3px;top:114px" width="16" height="16"><use href="#ic-prof"/></svg>
<div class="t" style="left:24.5px;top:113.86px;font-size:11.95px;color:#111;letter-spacing:-0.017px;">Agent Health OpsMgr Database Account</div>
<svg class="a" style="left:3px;top:136px" width="16" height="16"><use href="#ic-prof"/></svg>
<div class="t" style="left:24.5px;top:135.86px;font-size:11.95px;color:#111;letter-spacing:-0.030px;">AlwaysOn Discovery Account</div>
<svg class="a" style="left:3px;top:158px" width="16" height="16"><use href="#ic-prof"/></svg>
<div class="t" style="left:24.5px;top:157.86px;font-size:11.95px;color:#111;letter-spacing:0.196px;">AlwaysOn Monitoring Account</div>
<svg class="a" style="left:3px;top:180px" width="16" height="16"><use href="#ic-prof"/></svg>
<div class="t" style="left:24.5px;top:179.86px;font-size:11.95px;color:#111;letter-spacing:-0.068px;">APM CSM Encryption Profile</div>
<svg class="a" style="left:3px;top:202px" width="16" height="16"><use href="#ic-prof"/></svg>
<div class="t" style="left:24.5px;top:201.86px;font-size:11.95px;color:#111;letter-spacing:0.212px;">Automatic Agent Management Account</div>
<svg class="a" style="left:3px;top:224px" width="16" height="16"><use href="#ic-prof"/></svg>
<div class="t" style="left:24.5px;top:223.86px;font-size:11.95px;color:#111;letter-spacing:0.070px;">Certificate Signing Account</div>
<svg class="a" style="left:3px;top:246px" width="16" height="16"><use href="#ic-prof"/></svg>
<div class="t" style="left:24.5px;top:245.86px;font-size:11.95px;color:#111;letter-spacing:0.271px;">Client Monitoring Action Account</div>
<svg class="a" style="left:3px;top:268px" width="16" height="16"><use href="#ic-prof"/></svg>
<div class="t" style="left:24.5px;top:267.86px;font-size:11.95px;color:#111;letter-spacing:0.075px;">Connected Management Group Account</div>
<svg class="a" style="left:3px;top:290px" width="16" height="16"><use href="#ic-prof"/></svg>
<div class="t" style="left:24.5px;top:289.86px;font-size:11.95px;color:#111;letter-spacing:-0.073px;">Data Warehouse Account</div>
<svg class="a" style="left:3px;top:312px" width="16" height="16"><use href="#ic-prof"/></svg>
<div class="t" style="left:24.5px;top:311.86px;font-size:11.95px;color:#111;letter-spacing:-0.128px;">Data Warehouse Report Deployment Ac...</div>
<svg class="a" style="left:3px;top:334px" width="16" height="16"><use href="#ic-prof"/></svg>
<div class="t" style="left:24.5px;top:333.86px;font-size:11.95px;color:#111;letter-spacing:-0.216px;">Data Warehouse SQL Server Authenticat...</div>
<svg class="a" style="left:3px;top:356px" width="16" height="16"><use href="#ic-prof"/></svg>
<div class="t" style="left:24.5px;top:355.86px;font-size:11.95px;color:#111;letter-spacing:0.183px;">Default Action Account</div>
<svg class="a" style="left:3px;top:378px" width="16" height="16"><use href="#ic-prof"/></svg>
<div class="t" style="left:24.5px;top:377.86px;font-size:11.95px;color:#111;letter-spacing:-0.184px;">DFS Folder Targets Access Account</div>
<svg class="a" style="left:3px;top:400px" width="16" height="16"><use href="#ic-prof"/></svg>
<div class="t" style="left:24.5px;top:399.86px;font-size:11.95px;color:#111;letter-spacing:-0.207px;">DFS Namespace Discovery Account</div>
<svg class="a" style="left:3px;top:422px" width="16" height="16"><use href="#ic-prof"/></svg>
<div class="t" style="left:24.5px;top:421.86px;font-size:11.95px;color:#111;letter-spacing:-0.207px;">DFS Namespace Discovery Account</div>
<svg class="a" style="left:3px;top:444px" width="16" height="16"><use href="#ic-prof"/></svg>
<div class="t" style="left:24.5px;top:443.86px;font-size:11.95px;color:#111;letter-spacing:-0.272px;">DFS Paths Access Account</div>
<svg class="a" style="left:3px;top:466px" width="16" height="16"><use href="#ic-prof"/></svg>
<div class="t" style="left:24.5px;top:465.86px;font-size:11.95px;color:#111;letter-spacing:0.040px;">DFS Replication Monitoring Account</div>
<svg class="a" style="left:3px;top:488px" width="16" height="16"><use href="#ic-prof"/></svg>
<div class="t" style="left:24.5px;top:487.86px;font-size:11.95px;color:#111;letter-spacing:0.040px;">DFS Replication Monitoring Account</div>
<svg class="a" style="left:3px;top:510px" width="16" height="16"><use href="#ic-prof"/></svg>
<div class="t" style="left:24.5px;top:509.86px;font-size:11.95px;color:#111;letter-spacing:-0.061px;">DHCP Server Action Account</div>
<svg class="a" style="left:3px;top:532px" width="16" height="16"><use href="#ic-prof"/></svg>
<div class="t" style="left:24.5px;top:531.86px;font-size:11.95px;color:#111;letter-spacing:0.028px;">DNS Management Pack Action Account</div>
<svg class="a" style="left:3px;top:554px" width="16" height="16"><use href="#ic-prof"/></svg>
<div class="t" style="left:24.5px;top:553.86px;font-size:11.95px;color:#111;letter-spacing:-0.071px;">DNS Server Action Account</div>
<svg class="a" style="left:3px;top:576px" width="16" height="16"><use href="#ic-prof"/></svg>
<div class="t" style="left:24.5px;top:575.86px;font-size:11.95px;color:#111;letter-spacing:-0.450px;">ESX</div>
<svg class="a" style="left:3px;top:598px" width="16" height="16"><use href="#ic-prof"/></svg>
<div class="t" style="left:24.5px;top:597.86px;font-size:11.95px;color:#111;letter-spacing:-0.049px;">File Services Role Monitoring Account</div>
<svg class="a" style="left:3px;top:620px" width="16" height="16"><use href="#ic-prof"/></svg>
<div class="t" style="left:24.5px;top:619.86px;font-size:11.95px;color:#111;letter-spacing:-0.235px;">HP BladeSystem Enclosure Discovery Ac...</div>
<svg class="a" style="left:3px;top:642px" width="16" height="16"><use href="#ic-prof"/></svg>
<div class="t" style="left:24.5px;top:641.86px;font-size:11.95px;color:#111;letter-spacing:-0.111px;">HP BladeSystem Enclosure Monitoring ...</div>
<svg class="a" style="left:3px;top:664px" width="16" height="16"><use href="#ic-prof"/></svg>
<div class="t" style="left:24.5px;top:663.86px;font-size:11.95px;color:#111;letter-spacing:-0.019px;">HP Device Monitor Service Account</div>
<div class="t" style="left:254px;top:663.88px;font-size:11.9px;color:#111;letter-spacing:-0.005px;">This account is used for all discovery and monitoring of HP Device Monitor Services.</div>
<div class="t" style="left:794.5999999999999px;top:663.88px;font-size:11.9px;color:#111;letter-spacing:-0.336px;">10/29/2014 10:39:51 PM</div>
<svg class="a" style="left:3px;top:686px" width="16" height="16"><use href="#ic-prof"/></svg>
<div class="t" style="left:24.5px;top:685.86px;font-size:11.95px;color:#111;letter-spacing:-0.015px;">HP OneView Appliance Discovery/Moni...</div>
<div class="t" style="left:254px;top:685.88px;font-size:11.9px;color:#111;letter-spacing:0.055px;">This account is used to Discovery/Monitoring of HP OneView Appliance.</div>
<div class="t" style="left:794.5999999999999px;top:685.88px;font-size:11.9px;color:#111;letter-spacing:-0.336px;">10/29/2014 10:51:49 PM</div>
<svg class="a" style="left:3px;top:708px" width="16" height="16"><use href="#ic-prof"/></svg>
<div class="t" style="left:24.5px;top:707.86px;font-size:11.95px;color:#111;letter-spacing:-0.002px;">HP ProLiant Monitored Server Discover...</div>
<div class="t" style="left:254px;top:707.88px;font-size:11.9px;color:#111;letter-spacing:0.223px;">This Account is used for all discovery of HP ProLiant Monitored Servers.</div>
<div class="t" style="left:794.5999999999999px;top:707.88px;font-size:11.9px;color:#111;letter-spacing:-0.336px;">10/29/2014 10:41:09 PM</div>
</div>
<div class="a" style="left:1387px;top:122px;width:17px;height:736px;background:#fff;border-left:1px solid #c8c8c8;border-right:1px solid #c8c8c8"></div>
<div class="a" style="left:1387px;top:841px;width:17px;height:17px;background:#fff;border:1px solid #c8c8c8"></div>
<div class="a" style="left:1404px;top:94px;width:1px;height:764px;background:#c8cdd8"></div>
<svg class="a" style="left:1391px;top:847px" width="9" height="6"><path d="M.7 .7 L4.5 4.7 L8.3 .7" fill="none" stroke="#555" stroke-width="1.3"/></svg>
<div class="a" style="left:603px;top:111px;width:810px;height:689px;background:#c9d4e2;border:1px solid #4f5a66"></div>
<div class="a" style="left:896px;top:112px;width:256px;height:30px;background:#c5d6dc"></div>
<div class="a" style="left:1344px;top:112px;width:70px;height:30px;background:#c5d6dc"></div>
<svg class="a" style="left:613px;top:118px" width="17" height="17"><use href="#ic-wiz"/></svg>
<div class="t" style="left:957.8px;top:119.08px;font-size:14.2px;color:#111;letter-spacing:0.121px;">Run As Profile Wizard</div>
<div class="a" style="left:611px;top:142px;width:800px;height:64px;background:#868b8f"></div>
<svg class="a" style="left:618px;top:149px" width="36" height="48" viewBox="0 0 12 16"><use href="#person" width="12" height="16"/></svg>
<svg class="a" style="left:644px;top:176px" width="20" height="21"><use href="#gear" width="20" height="21"/></svg>
<div class="t" style="left:681px;top:165.66px;font-size:15.4px;color:#f4f4f4;letter-spacing:-0.097px;">Run As Accounts</div>
<div class="a" style="left:611px;top:206px;width:194px;height:531px;background:#fff"></div>
<div class="a" style="left:805px;top:206px;width:606px;height:531px;background:#f0f0f0"></div>
<div class="a" style="left:611px;top:736px;width:800px;height:56px;background:#f0f0f0"></div>
<div class="a" style="left:805px;top:736px;width:606px;height:1px;background:#fafafa"></div>
<div class="t" style="left:616px;top:212.69px;font-size:11px;color:#1f3a6e;letter-spacing:0.040px;">General Properties</div>
<div class="a" style="left:611px;top:237px;width:194px;height:19px;background:#3472b0"></div>
<div class="t" style="left:616px;top:238.19px;font-size:11px;color:#fff;letter-spacing:0.073px;">Run As Accounts</div>
<div class="t" style="left:616px;top:263.19px;font-size:11px;color:#555;letter-spacing:-0.038px;">Completion</div>
<div class="t" style="left:826px;top:239.12px;font-size:11.2px;color:#000;font-weight:bold;letter-spacing:0.121px;">Add Run As accounts</div>
<div class="a" style="left:824px;top:259px;width:340px;height:1px;background:linear-gradient(to right,#6a6a6a,#8a8a8a 60%,#f0f0f0)"></div>
<div class="t" style="left:826px;top:270.19px;font-size:11px;color:#000;letter-spacing:0.062px;">Add a Run As account to this Run As profile.  Additional Run As accounts can be added to manage specific classes,</div>
<div class="t" style="left:826px;top:283.19px;font-size:11px;color:#000;">groups, or objects.</div>
<div class="t" style="left:826px;top:324.19px;font-size:11px;color:#000;">Run As accounts:</div>
<svg class="a" style="left:1238px;top:326px" width="16" height="12" viewBox="0 0 16 12"><rect x="5.5" y="0" width="5" height="4.5" fill="#cfcfcf" stroke="#a8a8a8" stroke-width=".6"/><rect x="1" y="3.8" width="14" height="3" fill="#bdbdbd"/></svg>
<div class="t" style="left:1258px;top:325.19px;font-size:11px;color:#a9a9a9;">Add</div>
<svg class="a" style="left:1302px;top:325px" width="12" height="12" viewBox="0 0 12 12"><path d="M1 11 L2 8 L8.5 1.5 L10.5 3.5 L4 10 Z" fill="#e9b44a" stroke="#9a6a14" stroke-width=".6"/><path d="M8.5 1.5 L9.5 .5 L11.5 2.5 L10.5 3.5Z" fill="#d94a4a"/></svg>
<div class="t" style="left:1315px;top:325.19px;font-size:11px;color:#000;">Edit</div>
<svg class="a" style="left:1352px;top:326px" width="14" height="12" viewBox="0 0 14 12"><path d="M1 1 L13 11 M13 1 L1 11" stroke="#a5a5a5" stroke-width="1.6"/></svg>
<div class="clip" style="left:1372px;top:320px;width:8px;height:20px">
<div class="t" style="left:0px;top:5.19px;font-size:11px;color:#8a8a8a;">Remove</div>
</div>
<div class="a" style="left:827px;top:345px;width:578px;height:376px;background:#fff;border-left:1px solid #f4f4f4"></div>
<div class="a" style="left:828px;top:348px;width:576px;height:16px;background:linear-gradient(#fdfdfd,#f5f5f6);border:1px solid #e4e5e8"></div>
<div class="t" style="left:833px;top:348.19px;font-size:11px;color:#222;letter-spacing:.3px">Account Name</div>
<div class="clip" style="left:828px;top:364px;width:576px;height:357px">
<div class="a" style="left:0px;top:295px;width:562px;height:14px;background:linear-gradient(#f8f8f8,#e2e2e4);border:1px solid #d4d4d8;border-radius:3px"></div>
<svg class="a" style="left:3px;top:0px" width="16" height="14" viewBox="0 0 16 16" preserveAspectRatio="none"><use href="#ic-lvacct" width="16" height="16"/></svg>
<div class="t" style="left:23.5px;top:0.19px;font-size:11px;color:#000;letter-spacing:-0.031px;">Local System Action</div>
<svg class="a" style="left:3px;top:14px" width="16" height="14" viewBox="0 0 16 16" preserveAspectRatio="none"><use href="#ic-lvacct" width="16" height="16"/></svg>
<div class="t" style="left:23.5px;top:14.19px;font-size:11px;color:#000;letter-spacing:-0.031px;">Local System Action</div>
<svg class="a" style="left:3px;top:28px" width="16" height="14" viewBox="0 0 16 16" preserveAspectRatio="none"><use href="#ic-lvacct" width="16" height="16"/></svg>
<div class="t" style="left:23.5px;top:28.19px;font-size:11px;color:#000;letter-spacing:-0.450px;">PROTEL</div>
<svg class="a" style="left:3px;top:42px" width="16" height="14" viewBox="0 0 16 16" preserveAspectRatio="none"><use href="#ic-lvacct" width="16" height="16"/></svg>
<div class="t" style="left:23.5px;top:42.19px;font-size:11px;color:#000;letter-spacing:-0.031px;">Local System Action</div>
<svg class="a" style="left:3px;top:56px" width="16" height="14" viewBox="0 0 16 16" preserveAspectRatio="none"><use href="#ic-lvacct" width="16" height="16"/></svg>
<div class="t" style="left:23.5px;top:56.19px;font-size:11px;color:#000;letter-spacing:-0.031px;">Local System Action</div>
<svg class="a" style="left:3px;top:70px" width="16" height="14" viewBox="0 0 16 16" preserveAspectRatio="none"><use href="#ic-lvacct" width="16" height="16"/></svg>
<div class="t" style="left:23.5px;top:70.19px;font-size:11px;color:#000;letter-spacing:-0.031px;">Local System Action</div>
<svg class="a" style="left:3px;top:84px" width="16" height="14" viewBox="0 0 16 16" preserveAspectRatio="none"><use href="#ic-lvacct" width="16" height="16"/></svg>
<div class="t" style="left:23.5px;top:84.19px;font-size:11px;color:#000;letter-spacing:-0.031px;">Local System Action</div>
<svg class="a" style="left:3px;top:98px" width="16" height="14" viewBox="0 0 16 16" preserveAspectRatio="none"><use href="#ic-lvacct" width="16" height="16"/></svg>
<div class="t" style="left:23.5px;top:98.19px;font-size:11px;color:#000;letter-spacing:-0.031px;">Local System Action</div>
<svg class="a" style="left:3px;top:112px" width="16" height="14" viewBox="0 0 16 16" preserveAspectRatio="none"><use href="#ic-lvacct" width="16" height="16"/></svg>
<div class="t" style="left:23.5px;top:112.19px;font-size:11px;color:#000;letter-spacing:-0.031px;">Local System Action</div>
<svg class="a" style="left:3px;top:126px" width="16" height="14" viewBox="0 0 16 16" preserveAspectRatio="none"><use href="#ic-lvacct" width="16" height="16"/></svg>
<div class="t" style="left:23.5px;top:126.19px;font-size:11px;color:#000;letter-spacing:-0.450px;">PROTEL</div>
<svg class="a" style="left:3px;top:140px" width="16" height="14" viewBox="0 0 16 16" preserveAspectRatio="none"><use href="#ic-lvacct" width="16" height="16"/></svg>
<div class="t" style="left:23.5px;top:140.19px;font-size:11px;color:#000;letter-spacing:-0.031px;">Local System Action</div>
<svg class="a" style="left:3px;top:154px" width="16" height="14" viewBox="0 0 16 16" preserveAspectRatio="none"><use href="#ic-lvacct" width="16" height="16"/></svg>
<div class="t" style="left:23.5px;top:154.19px;font-size:11px;color:#000;letter-spacing:-0.031px;">Local System Action</div>
<svg class="a" style="left:3px;top:168px" width="16" height="14" viewBox="0 0 16 16" preserveAspectRatio="none"><use href="#ic-lvacct" width="16" height="16"/></svg>
<div class="t" style="left:23.5px;top:168.19px;font-size:11px;color:#000;letter-spacing:-0.031px;">Local System Action</div>
<svg class="a" style="left:3px;top:182px" width="16" height="14" viewBox="0 0 16 16" preserveAspectRatio="none"><use href="#ic-lvacct" width="16" height="16"/></svg>
<div class="t" style="left:23.5px;top:182.19px;font-size:11px;color:#000;letter-spacing:-0.031px;">Local System Action</div>
<svg class="a" style="left:3px;top:196px" width="16" height="14" viewBox="0 0 16 16" preserveAspectRatio="none"><use href="#ic-lvacct" width="16" height="16"/></svg>
<div class="t" style="left:23.5px;top:196.19px;font-size:11px;color:#000;letter-spacing:-0.031px;">Local System Action</div>
<svg class="a" style="left:3px;top:210px" width="16" height="14" viewBox="0 0 16 16" preserveAspectRatio="none"><use href="#ic-lvacct" width="16" height="16"/></svg>
<div class="t" style="left:23.5px;top:210.19px;font-size:11px;color:#000;letter-spacing:-0.031px;">Local System Action</div>
<svg class="a" style="left:3px;top:224px" width="16" height="14" viewBox="0 0 16 16" preserveAspectRatio="none"><use href="#ic-lvacct" width="16" height="16"/></svg>
<div class="t" style="left:23.5px;top:224.19px;font-size:11px;color:#000;letter-spacing:-0.450px;">PROTEL</div>
<svg class="a" style="left:3px;top:238px" width="16" height="14" viewBox="0 0 16 16" preserveAspectRatio="none"><use href="#ic-lvacct" width="16" height="16"/></svg>
<div class="t" style="left:23.5px;top:238.19px;font-size:11px;color:#000;letter-spacing:-0.031px;">Local System Action</div>
<svg class="a" style="left:3px;top:252px" width="16" height="14" viewBox="0 0 16 16" preserveAspectRatio="none"><use href="#ic-lvacct" width="16" height="16"/></svg>
<div class="t" style="left:23.5px;top:252.19px;font-size:11px;color:#000;letter-spacing:-0.031px;">Local System Action</div>
<svg class="a" style="left:3px;top:266px" width="16" height="14" viewBox="0 0 16 16" preserveAspectRatio="none"><use href="#ic-lvacct" width="16" height="16"/></svg>
<div class="t" style="left:23.5px;top:266.19px;font-size:11px;color:#000;letter-spacing:-0.031px;">Local System Action</div>
<svg class="a" style="left:3px;top:280px" width="16" height="14" viewBox="0 0 16 16" preserveAspectRatio="none"><use href="#ic-lvacct" width="16" height="16"/></svg>
<div class="t" style="left:23.5px;top:280.19px;font-size:11px;color:#000;letter-spacing:-0.031px;">Local System Action</div>
<div class="t" style="left:131.5px;top:280.19px;font-size:11px;color:#000;letter-spacing:-0.450px;">System</div>
<div class="t" style="left:206.5px;top:280.19px;font-size:11px;color:#000;letter-spacing:0.096px;">Management Server</div>
<div class="t" style="left:320.29999999999995px;top:280.19px;font-size:11px;color:#000;letter-spacing:-0.004px;">Health Service</div>
<div class="t" style="left:435.79999999999995px;top:280.47px;font-size:10.2px;color:#000;letter-spacing:-0.122px;">SPDBSRV.PROTEL.COM.T</div>
<svg class="a" style="left:3px;top:294px" width="16" height="14" viewBox="0 0 16 16" preserveAspectRatio="none"><use href="#ic-lvacct" width="16" height="16"/></svg>
<div class="t" style="left:23.5px;top:294.19px;font-size:11px;color:#000;letter-spacing:-0.031px;">Local System Action</div>
<div class="t" style="left:131.5px;top:294.19px;font-size:11px;color:#000;letter-spacing:-0.450px;">System</div>
<div class="t" style="left:206.5px;top:294.19px;font-size:11px;color:#000;letter-spacing:0.096px;">Management Server</div>
<div class="t" style="left:320.29999999999995px;top:294.19px;font-size:11px;color:#000;letter-spacing:-0.004px;">Health Service</div>
<div class="t" style="left:435.79999999999995px;top:294.47px;font-size:10.2px;color:#000;letter-spacing:-0.188px;">OTOMASYON_PC.PROTE</div>
<svg class="a" style="left:3px;top:308px" width="16" height="14" viewBox="0 0 16 16" preserveAspectRatio="none"><use href="#ic-lvacct" width="16" height="16"/></svg>
<div class="t" style="left:23.5px;top:308.19px;font-size:11px;color:#000;letter-spacing:-0.031px;">Local System Action</div>
<div class="t" style="left:131.5px;top:308.19px;font-size:11px;color:#000;letter-spacing:-0.450px;">System</div>
<div class="t" style="left:206.5px;top:308.19px;font-size:11px;color:#000;letter-spacing:0.096px;">Management Server</div>
<div class="t" style="left:320.29999999999995px;top:308.19px;font-size:11px;color:#000;letter-spacing:-0.004px;">Health Service</div>
<div class="t" style="left:435.79999999999995px;top:308.47px;font-size:10.2px;color:#000;letter-spacing:0.029px;">QVIEWSRV.PROTEL.COM</div>
<svg class="a" style="left:3px;top:322px" width="16" height="14" viewBox="0 0 16 16" preserveAspectRatio="none"><use href="#ic-lvacct" width="16" height="16"/></svg>
<div class="t" style="left:23.5px;top:322.19px;font-size:11px;color:#000;letter-spacing:-0.031px;">Local System Action</div>
<div class="t" style="left:131.5px;top:322.19px;font-size:11px;color:#000;letter-spacing:-0.450px;">System</div>
<div class="t" style="left:206.5px;top:322.19px;font-size:11px;color:#000;letter-spacing:0.096px;">Management Server</div>
<div class="t" style="left:320.29999999999995px;top:322.19px;font-size:11px;color:#000;letter-spacing:-0.004px;">Health Service</div>
<div class="t" style="left:435.79999999999995px;top:322.47px;font-size:10.2px;color:#000;letter-spacing:-0.271px;">PROTELNVR1.PROTEL.CO</div>
<svg class="a" style="left:3px;top:336px" width="16" height="14" viewBox="0 0 16 16" preserveAspectRatio="none"><use href="#ic-lvacct" width="16" height="16"/></svg>
<div class="t" style="left:23.5px;top:336.19px;font-size:11px;color:#000;letter-spacing:-0.031px;">Local System Action</div>
<div class="t" style="left:131.5px;top:336.19px;font-size:11px;color:#000;letter-spacing:-0.450px;">System</div>
<div class="t" style="left:206.5px;top:336.19px;font-size:11px;color:#000;letter-spacing:0.096px;">Management Server</div>
<div class="t" style="left:320.29999999999995px;top:336.19px;font-size:11px;color:#000;letter-spacing:-0.004px;">Health Service</div>
<div class="t" style="left:435.79999999999995px;top:336.47px;font-size:10.2px;color:#000;letter-spacing:-0.103px;">PROIMGSRV.PROTEL.CO</div>
<svg class="a" style="left:3px;top:350px" width="16" height="14" viewBox="0 0 16 16" preserveAspectRatio="none"><use href="#ic-lvacct" width="16" height="16"/></svg>
<div class="t" style="left:23.5px;top:350.19px;font-size:11px;color:#000;letter-spacing:-0.031px;">Local System Action</div>
<div class="t" style="left:131.5px;top:350.19px;font-size:11px;color:#000;letter-spacing:-0.450px;">System</div>
<div class="t" style="left:206.5px;top:350.19px;font-size:11px;color:#000;letter-spacing:0.096px;">Management Server</div>
<div class="t" style="left:320.29999999999995px;top:350.19px;font-size:11px;color:#000;letter-spacing:-0.004px;">Health Service</div>
<div class="t" style="left:435.79999999999995px;top:350.47px;font-size:10.2px;color:#000;letter-spacing:-0.097px;">PRODPMSRV.PROTEL.CO</div>
</div>
<div class="a" style="left:1118px;top:754px;width:73px;height:21px;background:linear-gradient(#e8e8e8,#dedede);border:1px solid #3c7fb1"></div>
<div class="t" style="left:1118px;width:73px;text-align:center;top:756.69px;font-size:11px;color:#000;letter-spacing:-0.25px">&lt; Previous</div>
<div class="a" style="left:1199px;top:754px;width:73px;height:21px;background:#efefef;border:1px solid #c0c0c0"></div>
<div class="t" style="left:1199px;width:73px;text-align:center;top:756.69px;font-size:11px;color:#9a9a9a;letter-spacing:-0.2px">Next &gt;</div>
<div class="a" style="left:1280px;top:754px;width:73px;height:21px;background:linear-gradient(#e8e8e8,#dedede);border:1px solid #acacac"></div>
<div class="t" style="left:1280px;width:73px;text-align:center;top:756.69px;font-size:11px;color:#000;letter-spacing:0px">Save</div>
<div class="a" style="left:1361px;top:754px;width:73px;height:21px;background:linear-gradient(#e8e8e8,#dedede);border:1px solid #acacac"></div>
<div class="t" style="left:1361px;width:73px;text-align:center;top:756.69px;font-size:11px;color:#000;letter-spacing:0px">Cancel</div>
<div class="a" style="left:604px;top:792px;width:806px;height:7px;background:#c3d3dc"></div>
<div class="a" style="left:868px;top:332px;width:545px;height:315px;background:#66c8ea;border:1px solid #3d4c57"></div>
<svg class="a" style="left:876px;top:338px" width="17" height="18" viewBox="0 0 17 18"><ellipse cx="6" cy="3.8" rx="2.6" ry="3" fill="#3a2a20"/><ellipse cx="6" cy="4.6" rx="2" ry="2.3" fill="#c98e5c"/><path d="M2 13 C2 8.5 4 7.6 6.2 7.6 C8 7.6 9 8.2 9.6 9 L9 13Z" fill="#e8d8a0"/>
<ellipse cx="11.3" cy="6.2" rx="2.6" ry="3" fill="#2b1d16"/><ellipse cx="11.3" cy="7" rx="2" ry="2.3" fill="#d9a066"/><path d="M6.8 15.5 C6.8 11 8.8 10 11.3 10 C13.8 10 15.8 11 15.8 15.5Z" fill="#3f7fe0"/><path d="M10.5 10.2 L11.3 13 L12.1 10.2Z" fill="#fff"/>
<use href="#key" x=".3" y="7" width="6.4" height="10.6"/></svg>
<div class="t" style="left:1071.0px;top:340.24px;font-size:14.6px;color:#111;letter-spacing:-0.012px;">Add a Run As Account</div>
<div class="a" style="left:1314px;top:333px;width:92px;height:21px;border-left:1px solid #3d4c57;border-bottom:1px solid #3d4c57"></div>
<div class="a" style="left:1368px;top:333px;width:40px;height:20px;background:#c75b52"></div>
<div class="a" style="left:1342px;top:333px;width:1px;height:20px;background:#3d4c57"></div>
<div class="a" style="left:1368px;top:333px;width:1px;height:20px;background:#3d4c57"></div>
<div class="a" style="left:1323px;top:343px;width:10px;height:3px;background:#000"></div>
<div class="a" style="left:1351px;top:338px;width:10px;height:9px;border:2px solid #000;border-top-width:3px"></div>
<svg class="a" style="left:1386px;top:338px" width="10" height="9"><path d="M1 .5 L9 8.5 M9 .5 L1 8.5" stroke="#000" stroke-width="2.4"/></svg>
<div class="a" style="left:876px;top:362px;width:540px;height:277px;background:#f0f0f0"></div>
<div class="t" style="left:887px;top:369.69px;font-size:11px;color:#000;letter-spacing:.04px">Select a Run As account to add to this profile.  Choose an account that has privileges that are</div>
<div class="t" style="left:887px;top:382.69px;font-size:11px;color:#000;">sufficient to monitor the objects that you specify.</div>
<div class="t" style="left:887px;top:416.19px;font-size:11px;color:#000;">Run As account:</div>
<div class="a" style="left:888px;top:438px;width:432px;height:21px;background:#fff;border:1px solid #7a7a7a"></div>
<div class="t" style="left:892px;top:441.19px;font-size:11px;color:#000;letter-spacing:-.25px;font-size:11.6px">OTOMASYON_PC</div>
<svg class="a" style="left:1306px;top:445px" width="9" height="7"><path d="M.8 .8 L4.5 5 L8.2 .8" fill="none" stroke="#444" stroke-width="1.6"/></svg>
<div class="a" style="left:1327px;top:437px;width:73px;height:21px;background:linear-gradient(#e8e8e8,#dedede);border:1px solid #acacac"></div>
<div class="t" style="left:1327px;width:73px;text-align:center;top:439.19px;font-size:11px;color:#000;letter-spacing:0px">New...</div>
<div class="t" style="left:887.5px;top:482.19px;font-size:11px;color:#000;letter-spacing:0.057px;">This Run As Account will be used to manage the following objects:</div>
<div class="a" style="left:888px;top:505px;width:12px;height:12px;border:1px solid #bcbcbc;border-radius:50%;background:#fafafa"></div>
<div class="t" style="left:905px;top:504.19px;font-size:11px;color:#a0a0a0;letter-spacing:0.023px;">All targeted objects</div>
<div class="a" style="left:888px;top:528.5px;width:12px;height:12px;border:1px solid #bcbcbc;border-radius:50%;background:#f4f4f4"></div>
<div class="a" style="left:891.5px;top:532px;width:5px;height:5px;border-radius:50%;background:#a8a8a8"></div>
<div class="t" style="left:905px;top:527.19px;font-size:11px;color:#a0a0a0;letter-spacing:0.077px;">A selected class, group, or object:</div>
<div class="a" style="left:907px;top:549px;width:413px;height:20px;background:#f0f0f0;border:1px solid #b9b9b9"></div>
<div class="t" style="left:910px;top:551.19px;font-size:11px;color:#6d6d6d;letter-spacing:-.22px">OTOMASYON_PC.PROTEL.COM.TR</div>
<div class="a" style="left:1327px;top:548px;width:73px;height:21px;background:#efefef;border:1px solid #c0c0c0"></div>
<div class="t" style="left:1327px;width:73px;text-align:center;top:550.19px;font-size:11px;color:#9a9a9a;letter-spacing:0px">Select...</div>
<div class="a" style="left:1246px;top:608px;width:73px;height:21px;background:linear-gradient(#e8e8e8,#dedede);border:1px solid #3c7fb1"></div>
<div class="t" style="left:1246px;width:73px;text-align:center;top:609.71px;font-size:11.8px;color:#000;letter-spacing:0px">OK</div>
<div class="a" style="left:1327px;top:608px;width:73px;height:21px;background:linear-gradient(#e8e8e8,#dedede);border:1px solid #acacac"></div>
<div class="t" style="left:1327px;width:73px;text-align:center;top:609.71px;font-size:11.8px;color:#000;letter-spacing:-0.2px">Cancel</div>
</body></html>
